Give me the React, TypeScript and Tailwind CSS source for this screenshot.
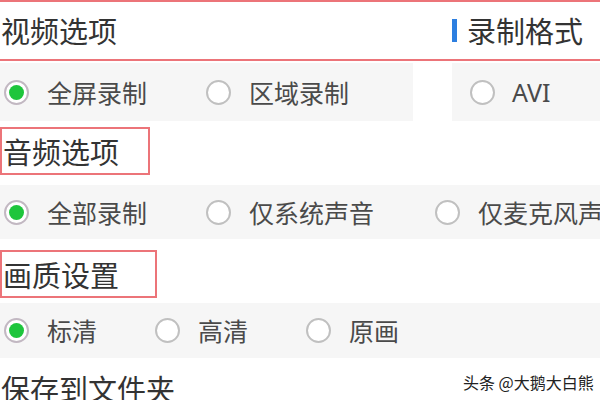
import React from "react";

const font = { fontFamily: '"Noto Sans CJK SC", "Noto Sans", sans-serif' };

function Radio({ checked }: { checked?: boolean }) {
  return (
    <div
      className={
        "w-[25px] h-[25px] shrink-0 rounded-full border-2 flex items-center justify-center bg-white " +
        (checked ? "border-[#c2b8c2]" : "border-[#c0c0c0]")
      }
    >
      {checked && <div className="w-[15px] h-[15px] rounded-full bg-[#1ec53c]" />}
    </div>
  );
}

function Option({ label, checked, w }: { label: string; checked?: boolean; w: string }) {
  return (
    <div className={"flex items-center shrink-0 " + w}>
      <Radio checked={checked} />
      <span className="ml-[18px] text-[25px] leading-none text-[#4a4a4a] whitespace-nowrap">{label}</span>
    </div>
  );
}

export default function App() {
  return (
    <div className="w-[600px] h-[400px] overflow-hidden bg-white relative" style={font}>
      {/* Section 1 header */}
      <div className="h-[61px] border-y-2 border-[#ec7479] flex items-center">
        <div className="w-[452px] pl-[1px] text-[29px] leading-none text-[#333]">视频选项</div>
        <div className="flex items-center">
          <div className="w-[5px] h-[23px] bg-[#2d7fe0]" />
          <span className="ml-[10px] text-[29px] leading-none text-[#333]">录制格式</span>
        </div>
      </div>
      {/* Row 1 */}
      <div className="mt-[2px] h-[58px] flex">
        <div className="w-[413px] bg-[#f6f6f6] flex items-center pl-[4px]">
          <Option label="全屏录制" checked w="w-[202px]" />
          <Option label="区域录制" w="w-[180px]" />
        </div>
        <div className="ml-[39px] flex-1 bg-[#f6f6f6] flex items-center pl-[18px]">
          <Radio />
          <span className="ml-[17px] text-[25px] leading-none text-[#4a4a4a]" style={{ fontFamily: '"Noto Sans", sans-serif' }}>
            AVI
          </span>
        </div>
      </div>
      {/* Section 2 header */}
      <div className="mt-[6px] w-[150px] h-[48px] border-2 border-[#ec7479] flex items-center pl-[1px]">
        <span className="text-[29px] leading-none text-[#333]">音频选项</span>
      </div>
      {/* Row 2 */}
      <div className="mt-[10px] h-[54px] bg-[#f6f6f6] flex items-center pl-[4px] whitespace-nowrap overflow-hidden">
        <Option label="全部录制" checked w="w-[202px]" />
        <Option label="仅系统声音" w="w-[229px]" />
        <Option label="仅麦克风声音" w="w-[200px]" />
      </div>
      {/* Section 3 header */}
      <div className="mt-[11px] w-[157px] h-[48px] border-2 border-[#ec7479] flex items-center pl-[1px]">
        <span className="text-[29px] leading-none text-[#333]">画质设置</span>
      </div>
      {/* Row 3 */}
      <div className="mt-[5px] h-[55px] bg-[#f6f6f6] flex items-center pl-[4px]">
        <Option label="标清" checked w="w-[151px]" />
        <Option label="高清" w="w-[151px]" />
        <Option label="原画" w="w-[120px]" />
      </div>
      {/* Section 4 */}
      <div className="mt-[16px] pl-[1px] text-[29px] leading-none text-[#333]">保存到文件夹</div>
      {/* Watermark */}
      <div className="absolute left-[463px] top-[374px] text-[16px] leading-none text-[#222] whitespace-nowrap">
        头条 @大鹅大白熊
      </div>
    </div>
  );
}
